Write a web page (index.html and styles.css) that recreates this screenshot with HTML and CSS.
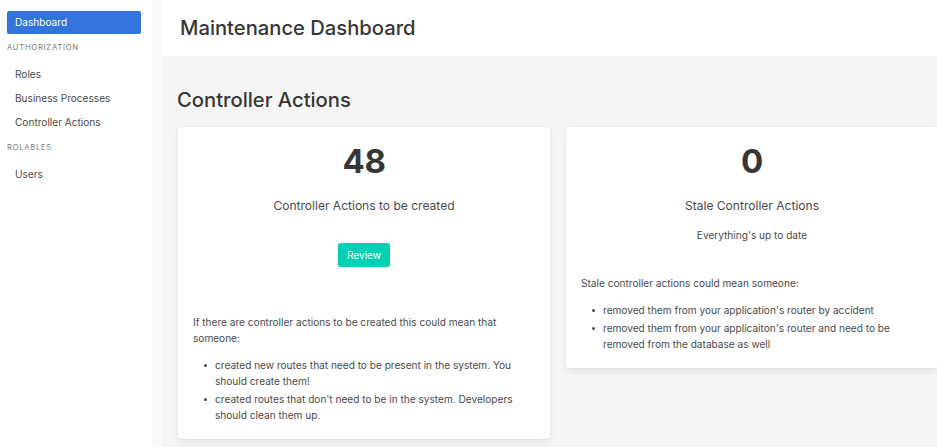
FILE: index.html
```html
<!DOCTYPE html>
<html lang="en">
<head>
<meta charset="utf-8">
<title>Maintenance Dashboard</title>
<link rel="stylesheet" href="styles.css">
</head>
<body>
<div class="layout">
  <aside class="sidebar">
    <a class="menu-link is-active" href="#">Dashboard</a>
    <p class="menu-label">Authorization</p>
    <ul class="menu-list">
      <li><a class="menu-link" href="#">Roles</a></li>
      <li><a class="menu-link" href="#">Business Processes</a></li>
      <li><a class="menu-link" href="#">Controller Actions</a></li>
    </ul>
    <p class="menu-label">Rolables</p>
    <ul class="menu-list">
      <li><a class="menu-link" href="#">Users</a></li>
    </ul>
  </aside>
  <div class="main">
    <header class="page-header">
      <h1 class="page-title">Maintenance Dashboard</h1>
    </header>
    <section class="content">
      <h2 class="section-title">Controller Actions</h2>
      <div class="cards">
        <div class="card">
          <div class="card-top">
            <p class="stat-number">48</p>
            <p class="stat-label">Controller Actions to be created</p>
            <div class="action-row"><a class="button" href="#">Review</a></div>
          </div>
          <div class="card-desc">
            <p>If there are controller actions to be created this could mean that someone:</p>
            <ul class="bullets">
              <li>created new routes that need to be present in the system. You should create them!</li>
              <li>created routes that don't need to be in the system. Developers should clean them up.</li>
            </ul>
          </div>
        </div>
        <div class="card">
          <div class="card-top">
            <p class="stat-number">0</p>
            <p class="stat-label">Stale Controller Actions</p>
            <p class="stat-note">Everything's up to date</p>
          </div>
          <div class="card-desc">
            <p>Stale controller actions could mean someone:</p>
            <ul class="bullets">
              <li>removed them from your application's router by accident</li>
              <li>removed them from your applicaiton's router and need to be removed from the database as well</li>
            </ul>
          </div>
        </div>
      </div>
    </section>
  </div>
</div>
</body>
</html>
```
FILE: styles.css
```css
html, body {
  margin: 0;
  padding: 0;
  height: 100%;
  overflow: hidden;
}
body {
  font-family: Inter, "Noto Sans", sans-serif;
  font-size: 10.1px;
  line-height: 16px;
  color: #4a4a4a;
  background: #f5f5f5;
}
p, ul, h1, h2 { margin: 0; padding: 0; }
a { text-decoration: none; color: inherit; }

.layout {
  display: flex;
  min-height: 100vh;
}

/* Sidebar */
.sidebar {
  width: 145px;
  flex: 0 0 145px;
  background: #fff;
  padding: 11px 0 0 7px;
  border-right: 10px solid #f9f9f9;
  min-height: 100vh;
  box-sizing: content-box;
}
.menu-link {
  display: block;
  width: 118px;
  padding: 4px 8px;
  line-height: 15px;
  border-radius: 2px;
  color: #4a4a4a;
}
.menu-link.is-active {
  background: #3273dc;
  color: #fff;
}
.menu-label {
  margin: 8px 0 9px;
  font-size: 7.6px;
  line-height: 11px;
  letter-spacing: 0.1em;
  text-transform: uppercase;
  color: #7a7a7a;
}
.menu-list {
  list-style: none;
}
.menu-list .menu-link {
  line-height: 16px;
}

/* Main */
.main {
  flex: 1;
  min-width: 0;
  display: flex;
  flex-direction: column;
}
.page-header {
  background: #fff;
  height: 56px;
  display: flex;
  align-items: center;
  padding-left: 18px;
}
.page-title {
  font-size: 20.2px;
  line-height: 24px;
  font-weight: 500;
  color: #363636;
}
.content {
  padding: 32px 0 0 16px;
}
.section-title {
  font-size: 20.2px;
  line-height: 24px;
  font-weight: 500;
  color: #363636;
  margin: 0 0 15px -1px;
}
.cards {
  display: grid;
  grid-template-columns: 372px 372px;
  gap: 16px;
  align-items: start;
}
.card {
  background: #fff;
  border-radius: 3px;
  box-shadow: 0 4px 9px -1px rgba(10, 10, 10, 0.08), 0 0 0 1px rgba(10, 10, 10, 0.02);
  padding: 15px;
}
.card-top {
  text-align: center;
}
.stat-number {
  font-size: 33px;
  line-height: 38px;
  font-weight: 700;
  letter-spacing: -0.5px;
  color: #363636;
}
.stat-label {
  margin-top: 17px;
  font-size: 12.05px;
  line-height: 18px;
  color: #4a4a4a;
}
.stat-note {
  margin-top: 12px;
  line-height: 16px;
}
.action-row {
  margin-top: 28px;
  padding-bottom: 15px;
}
.button {
  display: inline-block;
  background: #00d1b2;
  color: #fff;
  border-radius: 3px;
  padding: 4px 8.5px;
  line-height: 16px;
}
.card-desc {
  margin-top: 32px;
}
.bullets {
  list-style: none;
  margin: 11px 0 1px 22px;
}
.bullets li {
  position: relative;
}
.bullets li + li {
  margin-top: 2px;
}
.bullets li::before {
  content: "";
  position: absolute;
  left: -11px;
  top: 7px;
  width: 3px;
  height: 3px;
  border-radius: 50%;
  background: #4a4a4a;
}
```
